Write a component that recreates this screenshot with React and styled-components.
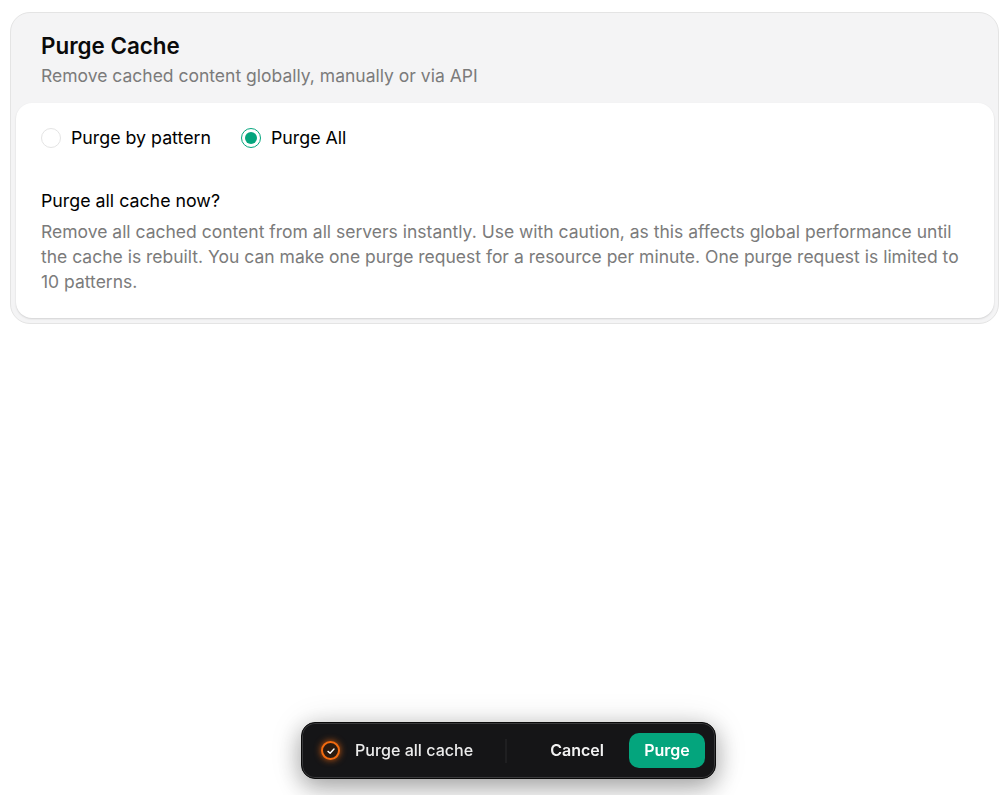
import React, { useState } from "react";
import styled, { createGlobalStyle } from "styled-components";

const GlobalStyle = createGlobalStyle`
  html, body {
    margin: 0;
    padding: 0;
    background: #ffffff;
    font-family: "Inter", "Liberation Sans", sans-serif;
  }
`;

const Page = styled.main`
  width: 1002px;
  height: 795px;
  box-sizing: border-box;
  padding: 12px 3px 0 10px;
  overflow: hidden;
`;

const Panel = styled.section`
  background: #f4f4f5;
  border: 1px solid #e4e4e4;
  border-radius: 20px;
  padding: 0 4px 5px 5px;
`;

const PanelHeader = styled.header`
  padding: 18px 25px 15px;
`;

const Title = styled.h1`
  margin: 0;
  font-size: 22.4px;
  line-height: 29px;
  font-weight: 600;
  color: #0a0a0a;
`;

const Subtitle = styled.p`
  margin: 4px 0 0;
  font-size: 17.5px;
  line-height: 24px;
  color: #7b7b7b;
`;

const Card = styled.div`
  background: #ffffff;
  border-radius: 16px;
  box-shadow: 0 1px 2px rgba(0, 0, 0, 0.14);
  padding: 25px 25px 24px 25px;
`;

const RadioRow = styled.div`
  display: flex;
  gap: 30px;
`;

const RadioLabel = styled.label`
  display: flex;
  align-items: center;
  gap: 10px;
  font-size: 17.8px;
  line-height: 20px;
  font-weight: 400;
  color: #000000;
  cursor: pointer;
`;

const RadioDot = styled.span`
  width: 20px;
  height: 20px;
  box-sizing: border-box;
  border-radius: 50%;
  display: flex;
  align-items: center;
  justify-content: center;
  background: #ffffff;
  border: 1px solid ${(p) => (p.$checked ? "#04a57d" : "#e4e4e4")};

  &::after {
    content: "";
    width: 12px;
    height: 12px;
    border-radius: 50%;
    background: ${(p) => (p.$checked ? "#04a57d" : "transparent")};
  }
`;

const Question = styled.h2`
  margin: 42px 0 0;
  font-size: 17.8px;
  line-height: 22px;
  font-weight: 400;
  color: #000000;
`;

const Description = styled.p`
  margin: 7px 0 0;
  font-size: 17.5px;
  line-height: 25px;
  color: #7b7b7b;
`;

const ActionBar = styled.div`
  position: fixed;
  left: 301px;
  top: 722px;
  width: 415px;
  height: 57px;
  box-sizing: border-box;
  display: flex;
  align-items: center;
  padding: 0 10px 0 19px;
  background: #151517;
  border: 1px solid #0a0a0a;
  border-radius: 14px;
  box-shadow: inset 0 0 0 1px #3a3a3c, 0 8px 24px rgba(0, 0, 0, 0.32), 0 2px 34px rgba(0, 0, 0, 0.12);
`;

const StatusIcon = styled.span`
  width: 19px;
  height: 19px;
  border-radius: 50%;
  border: 2px solid #f26a0f;
  box-sizing: border-box;
  display: flex;
  align-items: center;
  justify-content: center;
  background: #2a1a10;
  box-shadow: 0 0 7px rgba(242, 106, 15, 0.85);
`;

const BarLabel = styled.span`
  margin-left: 15px;
  padding-bottom: 1px;
  font-size: 16.1px;
  font-weight: 500;
  color: #ececec;
`;

const Divider = styled.span`
  width: 2px;
  height: 24px;
  margin-left: 32px;
  background: #1f1f21;
`;

const GhostButton = styled.button`
  margin-left: auto;
  border: 0;
  background: transparent;
  font-family: inherit;
  font-size: 16px;
  font-weight: 600;
  color: #f2f2f2;
  padding: 0 0 1px;
  cursor: pointer;
`;

const PrimaryButton = styled.button`
  margin-left: 25px;
  width: 76px;
  height: 35px;
  border: 0;
  border-radius: 10px;
  background: #04a57d;
  font-family: inherit;
  font-size: 16px;
  font-weight: 600;
  color: #ffffff;
  padding: 0 0 1px;
  cursor: pointer;
`;

function App() {
  const [mode, setMode] = useState("all");

  return (
    <>
      <GlobalStyle />
      <Page>
        <Panel>
          <PanelHeader>
            <Title>Purge Cache</Title>
            <Subtitle>Remove cached content globally, manually or via API</Subtitle>
          </PanelHeader>
          <Card>
            <RadioRow>
              <RadioLabel onClick={() => setMode("pattern")}>
                <RadioDot $checked={mode === "pattern"} />
                Purge by pattern
              </RadioLabel>
              <RadioLabel onClick={() => setMode("all")}>
                <RadioDot $checked={mode === "all"} />
                Purge All
              </RadioLabel>
            </RadioRow>
            <Question>Purge all cache now?</Question>
            <Description>
              Remove all cached content from all servers instantly. Use with caution, as this
              affects global performance until the cache is rebuilt. You can make one purge
              request for a resource per minute. One purge request is limited to 10 patterns.
            </Description>
          </Card>
        </Panel>
      </Page>
      <ActionBar>
        <StatusIcon>
          <svg width="10" height="10" viewBox="0 0 10 10" fill="none">
            <path d="M2 5.4 L4.1 7.2 L8 3" stroke="#ffffff" strokeWidth="1.4" strokeLinecap="round" strokeLinejoin="round" />
          </svg>
        </StatusIcon>
        <BarLabel>Purge all cache</BarLabel>
        <Divider />
        <GhostButton>Cancel</GhostButton>
        <PrimaryButton>Purge</PrimaryButton>
      </ActionBar>
    </>
  );
}

export default App;
